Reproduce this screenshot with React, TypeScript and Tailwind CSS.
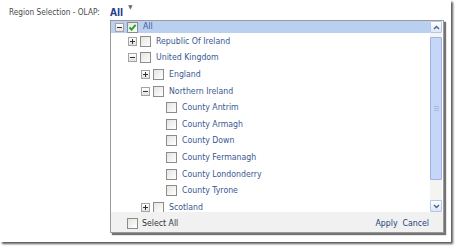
import React from "react";

type Node = { label: string; level: number; expander?: "plus" | "minus"; checked?: boolean };

const rows: Node[] = [
  { label: "Republic Of Ireland", level: 1, expander: "plus" },
  { label: "United Kingdom", level: 1, expander: "minus" },
  { label: "England", level: 2, expander: "plus" },
  { label: "Northern Ireland", level: 2, expander: "minus" },
  { label: "County Antrim", level: 3 },
  { label: "County Armagh", level: 3 },
  { label: "County Down", level: 3 },
  { label: "County Fermanagh", level: 3 },
  { label: "County Londonderry", level: 3 },
  { label: "County Tyrone", level: 3 },
  { label: "Scotland", level: 2, expander: "plus" },
];

const indent = ["pl-[4px]", "pl-[17px]", "pl-[30px]", "pl-[43px]"];

function Expander({ kind }: { kind?: "plus" | "minus" }) {
  if (!kind) return <span className="w-[9px] h-[9px] shrink-0" />;
  return (
    <span className="relative w-[9px] h-[9px] shrink-0 border border-[#a4a4a4] bg-gradient-to-b from-white to-[#e2e2e2]">
      <span className="absolute left-[1px] top-[3px] w-[5px] h-[1px] bg-[#333]" />
      {kind === "plus" && <span className="absolute left-[3px] top-[1px] w-[1px] h-[5px] bg-[#333]" />}
    </span>
  );
}

function Check({ checked }: { checked?: boolean }) {
  return (
    <span className="w-[11px] h-[11px] shrink-0 border border-[#8c8c8c] bg-gradient-to-br from-[#e4e4e0] to-white flex items-center justify-center">
      {checked && (
        <svg width="9" height="9" viewBox="0 0 9 9">
          <path d="M1.5 4.5 L3.6 6.6 L7.6 1.8" fill="none" stroke="#21a121" strokeWidth="1.8" />
        </svg>
      )}
    </span>
  );
}

function Row({ node }: { node: Node }) {
  return (
    <div className={`h-[16.6px] flex items-center gap-[3px] ${indent[node.level]}`}>
      <Expander kind={node.expander} />
      <Check checked={node.checked} />
      <span className="ml-[2px] text-[#3b5892] whitespace-nowrap">{node.label}</span>
    </div>
  );
}

function ScrollBar() {
  return (
    <div className="w-[12px] mr-[1px] flex flex-col bg-[#f4f4f0]">
      <div className="h-[12px] border border-[#b4c6ec] bg-gradient-to-b from-white to-[#dde6f8] rounded-[1px] flex items-center justify-center">
        <svg width="7" height="5" viewBox="0 0 7 5">
          <path d="M1 4 L3.5 1.5 L6 4" fill="none" stroke="#4d6185" strokeWidth="1.4" />
        </svg>
      </div>
      <div className="mt-[4px] h-[143px] border border-[#9fb2e0] bg-[#c6d6f8] rounded-[1px] flex items-center justify-center">
        <div className="flex flex-col gap-[1px]">
          <span className="w-[5px] h-[1px] bg-[#a7b9e2]" />
          <span className="w-[5px] h-[1px] bg-[#a7b9e2]" />
          <span className="w-[5px] h-[1px] bg-[#a7b9e2]" />
        </div>
      </div>
      <div className="flex-1" />
      <div className="h-[12px] border border-[#b4c6ec] bg-gradient-to-b from-white to-[#dde6f8] rounded-[1px] flex items-center justify-center">
        <svg width="7" height="5" viewBox="0 0 7 5">
          <path d="M1 1 L3.5 3.5 L6 1" fill="none" stroke="#4d6185" strokeWidth="1.4" />
        </svg>
      </div>
    </div>
  );
}

export default function App() {
  return (
    <div
      className="w-[456px] h-[248px] bg-white overflow-hidden"
      style={{ fontFamily: "'DejaVu Sans Condensed', 'Liberation Sans', sans-serif" }}
    >
      <div className="w-[451px] h-[242px] bg-white shadow-[2px_2px_2px_rgba(0,0,0,0.65)] text-[8.7px] flex flex-col">
        <div className="h-[20px] flex items-center pt-[4px]">
          <span className="w-[110px] pl-[9px] text-[8.2px] text-[#4a4a4a] whitespace-nowrap">Region Selection - OLAP:</span>
          <span className="font-bold text-[#23408a] text-[10px]">All</span>
          <span className="ml-[5px] -mt-[12px] text-[6px] text-[#666]">▼</span>
        </div>
        <div className="ml-[110px] w-[334px] h-[213px] border border-[#9a9a9a] bg-white shadow-[2px_2px_1px_rgba(0,0,0,0.55)] flex flex-col">
          <div className="flex h-[191px]">
            <div className="flex-1 overflow-hidden">
              <div className="h-[12px] bg-[#b9d0f1] flex items-center gap-[3px] pl-[4px]">
                <Expander kind="minus" />
                <Check checked />
                <span className="ml-[2px] text-[#3b5892]">All</span>
              </div>
              {rows.map((r) => (
                <Row key={r.label} node={r} />
              ))}
            </div>
            <ScrollBar />
          </div>
          <div className="flex-1 bg-[#f1f1f1] flex items-center pt-[3px] pl-[16px] pr-[14px]">
            <Check />
            <span className="ml-[4px] text-[#333]">Select All</span>
            <span className="ml-auto text-[#23427a]">Apply</span>
            <span className="ml-[5px] text-[#23427a]">Cancel</span>
          </div>
        </div>
      </div>
    </div>
  );
}
